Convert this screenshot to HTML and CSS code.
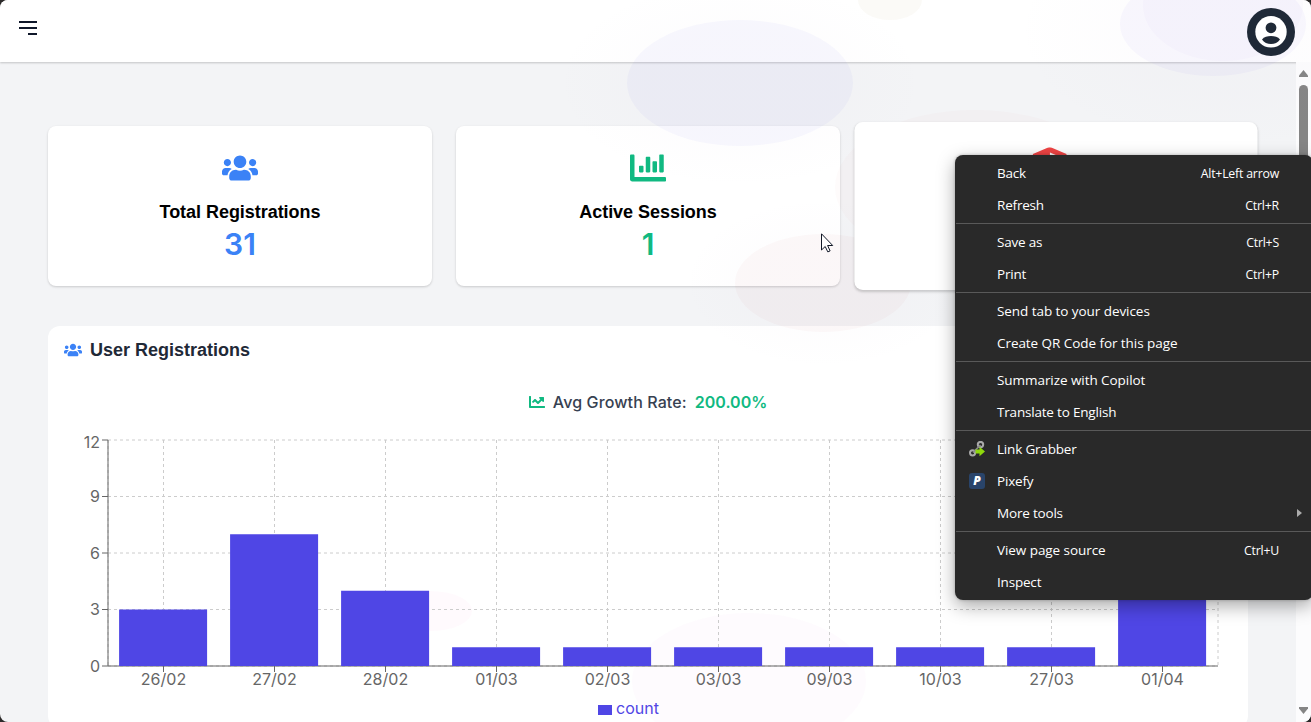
FILE: index.html
```html
<!DOCTYPE html>
<html lang="en">
<head>
<meta charset="utf-8">
<title>Dashboard</title>
<link rel="stylesheet" href="styles.css">
</head>
<body>
<svg class="defs" aria-hidden="true">
  <symbol id="users" viewBox="0 0 640 512"><path d="M96 224c35.3 0 64-28.7 64-64s-28.7-64-64-64-64 28.7-64 64 28.7 64 64 64zm448 0c35.3 0 64-28.7 64-64s-28.7-64-64-64-64 28.7-64 64 28.7 64 64 64zm32 32h-64c-17.6 0-33.5 7.1-45.1 18.6 40.3 22.1 68.9 62 75.1 109.4h66c17.7 0 32-14.3 32-32v-32c0-35.3-28.7-64-64-64zm-256 0c61.9 0 112-50.1 112-112S381.9 32 320 32 208 82.1 208 144s50.1 112 112 112zm76.8 32h-8.3c-20.8 10-43.9 16-68.5 16s-47.6-6-68.5-16h-8.3C179.6 288 128 339.6 128 403.2V432c0 26.5 21.5 48 48 48h288c26.5 0 48-21.5 48-48v-28.8c0-63.6-51.6-115.2-115.2-115.2zm-223.7-13.4C161.5 263.1 145.6 256 128 256H64c-35.3 0-64 28.7-64 64v32c0 17.7 14.3 32 32 32h65.9c6.3-47.4 34.9-87.3 75.2-109.4z"/></symbol>
</svg>
<div class="window">
  <header class="topbar">
    <svg class="menu-icon" width="18" height="14" viewBox="0 0 18 14"><path d="M0 1h18M0 7h18M9 13h9" stroke="#0f172a" stroke-width="2"/></svg>
    <svg class="avatar" width="48" height="48" viewBox="0 0 48 48"><circle cx="24" cy="24" r="24" fill="#1f2937"/><circle cx="24" cy="23.8" r="15.7" fill="#fff"/><circle cx="24" cy="19.8" r="5.4" fill="#1f2937"/><path d="M15 31.5c2-2.600 5.500-3.500 9-3.500s7 .9 9 3.500c-2 3-5.400 4.500-9 4.500s-7-1.500-9-4.500z" fill="#1f2937"/></svg>
  </header>
  <div class="body">
    <main class="content">
      <section class="cards">
        <article class="card">
          <svg class="card-icon blue" width="36" height="36"><use href="#users"/></svg>
          <h3>Total Registrations</h3>
          <p class="blue">31</p>
        </article>
        <article class="card">
          <svg class="card-icon green" width="36" height="36" viewBox="0 0 512 512"><path d="M332.8 320h38.4c6.4 0 12.8-6.4 12.8-12.8V172.8c0-6.4-6.4-12.8-12.8-12.8h-38.4c-6.4 0-12.8 6.4-12.8 12.8v134.4c0 6.4 6.4 12.8 12.8 12.8zm96 0h38.4c6.4 0 12.8-6.4 12.8-12.8V76.8c0-6.4-6.4-12.8-12.8-12.8h-38.4c-6.4 0-12.8 6.4-12.8 12.8v230.4c0 6.4 6.4 12.8 12.8 12.8zm-288 0h38.4c6.4 0 12.8-6.4 12.8-12.8v-70.4c0-6.4-6.4-12.8-12.8-12.8h-38.4c-6.4 0-12.8 6.4-12.8 12.8v70.4c0 6.4 6.4 12.8 12.8 12.8zm96 0h38.4c6.4 0 12.8-6.4 12.8-12.8V108.8c0-6.4-6.4-12.8-12.8-12.8h-38.4c-6.4 0-12.8 6.4-12.8 12.8v198.4c0 6.4 6.4 12.8 12.8 12.8zM496 384H64V80c0-8.840-7.160-16-16-16H16C7.160 64 0 71.160 0 80v336c0 17.670 14.330 32 32 32h464c8.840 0 16-7.160 16-16v-32c0-8.840-7.160-16-16-16z"/></svg>
          <h3>Active Sessions</h3>
          <p class="green">1</p>
        </article>
        <article class="card raised">
          <svg class="card-icon" width="36" height="36" viewBox="0 0 36 36"><path d="M16.500 .3Q18-.4 19.500 .3L34 6.500v22L18 36 2 28.500V6.500z" fill="#ef4444"/><path d="M18.200 5L30 10H18.200z" fill="#fff"/></svg>
        </article>
      </section>
      <section class="panel">
        <h2 class="panel-title"><svg class="blue" width="18" height="18"><use href="#users"/></svg>User Registrations</h2>
        <div class="growth">
          <svg class="green" width="16" height="16" viewBox="0 0 512 512"><path d="M496 384H64V80c0-8.840-7.160-16-16-16H16C7.160 64 0 71.160 0 80v336c0 17.670 14.330 32 32 32h464c8.840 0 16-7.160 16-16v-32c0-8.840-7.160-16-16-16zM464 96H345.940c-21.380 0-32.090 25.850-16.970 40.970l32.400 32.400L288 242.750l-73.370-73.370c-12.500-12.500-32.760-12.500-45.250 0l-68.690 68.690c-6.250 6.250-6.250 16.380 0 22.630l22.620 22.620c6.250 6.250 16.380 6.250 22.630 0L192 237.250l73.370 73.370c12.500 12.500 32.760 12.500 45.250 0l96-96 32.400 32.400c15.120 15.120 40.970 4.410 40.970-16.970V112c.01-8.840-7.150-16-15.990-16z"/></svg>
          <span>Avg Growth Rate:</span><span class="green rate">200.00%</span>
        </div>
        <svg class="chart" width="1200" height="270" viewBox="48 430 1200 270">
          <g class="grid">
            <path d="M108 440H1218M108 496.500H1218M108 553H1218M108 609.500H1218M108 666H1218"/>
            <path d="M163.500 440V666M274.500 440V666M385.500 440V666M496.500 440V666M607.500 440V666M718.500 440V666M829.500 440V666M940.500 440V666M1051.500 440V666M1162.500 440V666M108 440V666M1218 440V666"/>
          </g>
          <g class="axis">
            <path d="M108 440V666M102 440h6M102 496.500h6M102 553h6M102 609.500h6M102 666H1218"/>
            <path d="M163.500 666v6M274.500 666v6M385.500 666v6M496.500 666v6M607.500 666v6M718.500 666v6M829.500 666v6M940.500 666v6M1051.500 666v6M1162.500 666v6"/>
          </g>
          <g class="bars">
            <path d="M119.100 609.500h88v56.500h-88zM230.100 534.170h88V666h-88zM341.100 590.670h88V666h-88zM452.100 647.170h88V666h-88zM563.100 647.170h88V666h-88zM674.100 647.170h88V666h-88zM785.100 647.170h88V666h-88zM896.100 647.170h88V666h-88zM1007.100 647.170h88V666h-88zM1118.100 459h88V666h-88z"/>
          </g>
          <g class="ylab"><text x="100" y="448">12</text><text x="100" y="502">9</text><text x="100" y="559">6</text><text x="100" y="615">3</text><text x="100" y="672">0</text></g>
          <g class="xlab"><text x="163.500" y="685">26/02</text><text x="274.500" y="685">27/02</text><text x="385.500" y="685">28/02</text><text x="496.500" y="685">01/03</text><text x="607.500" y="685">02/03</text><text x="718.500" y="685">03/03</text><text x="829.500" y="685">09/03</text><text x="940.500" y="685">10/03</text><text x="1051.500" y="685">27/03</text><text x="1162.500" y="685">01/04</text></g>
        </svg>
        <div class="legend"><i></i>count</div>
      </section>
    </main>
    <div class="scrollbar">
      <svg width="9" height="7"><path d="M4.500 0L9 5.500V7H0V5.500z" fill="#858585"/></svg>
      <div class="thumb"></div>
      <svg width="9" height="7"><path d="M0 0h9v1.500L4.500 7 0 1.500z" fill="#858585"/></svg>
    </div>
  </div>
  <svg class="glow" width="1311" height="722" aria-hidden="true">
    <defs>
      <radialGradient id="haze"><stop offset=".5" stop-color="#a78bba" stop-opacity=".018"/><stop offset="1" stop-color="#a78bba" stop-opacity="0"/></radialGradient>
    </defs>
    <ellipse cx="740" cy="83" rx="185" ry="105" fill="url(#haze)"/>
    <ellipse cx="1225" cy="30" rx="210" ry="120" fill="url(#haze)"/>
    <ellipse cx="823" cy="283" rx="140" ry="85" fill="url(#haze)"/>
    <ellipse cx="740" cy="83" rx="113" ry="63" fill="#6366f1" fill-opacity=".042"/>
    <ellipse cx="823" cy="283" rx="88" ry="49" fill="#d05050" fill-opacity=".035"/>
    <ellipse cx="975" cy="187" rx="140" ry="77" fill="#e04848" fill-opacity=".022"/>
    <ellipse cx="890" cy="0" rx="32" ry="20" fill="#b8a060" fill-opacity=".05"/>
    <ellipse cx="1213" cy="24" rx="93" ry="52" fill="#6d5be8" fill-opacity=".045"/>
    <ellipse cx="1223" cy="5" rx="80" ry="56" fill="#6d5be8" fill-opacity=".025"/>
    <ellipse cx="430" cy="611" rx="42" ry="20" fill="#ff50b4" fill-opacity=".033"/>
    <ellipse cx="749" cy="681" rx="117" ry="68" fill="#c860c8" fill-opacity=".025"/>
  </svg>
  <svg class="cursor" width="13" height="20" viewBox="0 0 13 20"><path d="M.5 .8v16.200l3.700-3.500 2.600 5.400 2.300-1-2.500-5.400h5.100z" fill="#fff" stroke="#111827"/></svg>
  <nav class="context">
    <div class="item">Back<kbd>Alt+Left arrow</kbd></div>
    <div class="item">Refresh<kbd>Ctrl+R</kbd></div>
    <hr>
    <div class="item">Save as<kbd>Ctrl+S</kbd></div>
    <div class="item">Print<kbd>Ctrl+P</kbd></div>
    <hr>
    <div class="item wide">Send tab to your devices</div>
    <div class="item wide">Create QR Code for this page</div>
    <hr>
    <div class="item wide">Summarize with Copilot</div>
    <div class="item">Translate to English</div>
    <hr>
    <div class="item with-icon"><svg width="16" height="16" viewBox="0 0 16 16"><g fill="none" stroke="#a9a9a9" stroke-width="2"><circle cx="3.600" cy="11.800" r="2.600"/><circle cx="11.500" cy="3.600" r="2.700"/></g><path d="M4 11.500L11.500 4" stroke="#8b8b8b" stroke-width="1.700"/><path d="M6.500 8.600h4V5.800L16 10.500 10.500 15.300v-2.900h-4z" fill="#8ed80c"/></svg>Link Grabber</div>
    <div class="item with-icon"><span class="pix">P</span>Pixefy</div>
    <div class="item">More tools<svg class="more" width="5" height="8"><path d="M0 0l5 4-5 4z" fill="#ababab"/></svg></div>
    <hr>
    <div class="item wide">View page source<kbd>Ctrl+U</kbd></div>
    <div class="item">Inspect</div>
  </nav>
</div>
</body>
</html>
```
FILE: styles.css
```css
* { box-sizing: border-box; }
body { margin: 0; background: #2c2a2a; font-family: Inter, sans-serif; overflow: hidden; }
.defs { position: absolute; width: 0; height: 0; }
.window { position: relative; display: flex; flex-direction: column; width: 1311px; height: 722px; background: #f3f4f6; border-radius: 8px; overflow: hidden; }
.topbar { display: flex; justify-content: space-between; flex: none; height: 62px; padding: 8px 16px 0 19px; background: #fff; box-shadow: 0 1px 2px rgba(0,0,0,.2); position: relative; }
.menu-icon { margin-top: 13px; }
.avatar { position: relative; z-index: 3; }
.body { display: flex; flex: 1; min-height: 0; }
.content { flex: 1; padding: 64px 48px 0; min-width: 0; }
.cards { display: grid; grid-template-columns: repeat(3, 384px); gap: 24px; }
.card { height: 160px; padding: 24px; display: flex; flex-direction: column; align-items: center; background: #fff; border-radius: 8px; box-shadow: 0 1px 3px rgba(0,0,0,.1), 0 1px 2px rgba(0,0,0,.08); }
.card-icon { flex: none; margin-bottom: 12px; }
.card h3 { margin: 0; font: bold 18px/28px "Liberation Sans", Arial, sans-serif; letter-spacing: -.04px; color: #000; }
.card p { margin: 0; font-size: 30px; line-height: 36px; font-weight: 600; }
.raised { position: relative; z-index: 2; transform: scale(1.05); }
.raised .card-icon { margin-right: 12px; }
.blue { color: #3b82f6; fill: #3b82f6; }
.green { color: #10b981; fill: #10b981; }
.panel { width: 1200px; height: 402px; margin-top: 40px; background: #fff; border-radius: 12px; }
.panel-title { display: flex; align-items: center; gap: 8px; height: 48px; margin: 0; padding-left: 16px; font: bold 18px/28px "Liberation Sans", Arial, sans-serif; color: #1f2937; }
.growth { display: flex; align-items: center; justify-content: center; gap: 8px; height: 24px; margin-top: 16px; font-size: 16px; font-weight: 500; letter-spacing: .12px; color: #374151; }
.growth .rate { font-weight: 600; letter-spacing: 0; }
.chart { display: block; position: relative; z-index: 2; margin-top: 16px; font-size: 16px; }
.grid { fill: none; stroke: #ccc; stroke-dasharray: 3 3; }
.axis { fill: none; stroke: #666; }
.bars { fill: #4f46e5; }
.ylab { fill: #666; text-anchor: end; }
.xlab { fill: #666; text-anchor: middle; }
.legend { display: flex; align-items: center; gap: 4px; height: 18px; padding-left: 550px; margin-top: -1px; font-size: 16px; color: #4f46e5; }
.legend i { width: 14px; height: 10px; margin-top: 3px; background: #4f46e5; }
.scrollbar { width: 15px; flex: none; display: flex; flex-direction: column; align-items: center; padding: 8px 0; background: #fcfcfd; position: relative; }
.thumb { width: 9px; height: 220px; margin: 8px 0 auto; border-radius: 5px; background: #858585; }
.glow { position: absolute; left: 0; top: 0; z-index: 1; pointer-events: none; }
.cursor { position: absolute; left: 821px; top: 233px; z-index: 3; }
.context { position: absolute; left: 955px; top: 155px; z-index: 5; width: 358px; height: 445px; padding: 2px 0; border-radius: 8px; background: #292929; color: #fff; box-shadow: 0 6px 18px rgba(0,0,0,.34), 0 0 3px rgba(0,0,0,.25); font: 13.5px/32px "Open Sans", sans-serif; letter-spacing: -.19px; }
.context hr { height: 1px; margin: 2px 0 2px 1px; border: 0; background: #595959; }
.item { display: flex; align-items: center; height: 32px; padding: 0 34px 0 42px; white-space: nowrap; }
.wide { letter-spacing: -.06px; }
.item kbd { margin-left: auto; font: 12.3px/32px "Open Sans", sans-serif; letter-spacing: -.2px; padding-top: 2px; }
.with-icon { padding-left: 14px; gap: 12px; }
.pix { width: 16px; height: 16px; border-radius: 3px; background: #29446a; font: italic 800 12px/16px "Open Sans", sans-serif; text-align: center; }
.more { margin: 0 -23px 0 auto; }
```
